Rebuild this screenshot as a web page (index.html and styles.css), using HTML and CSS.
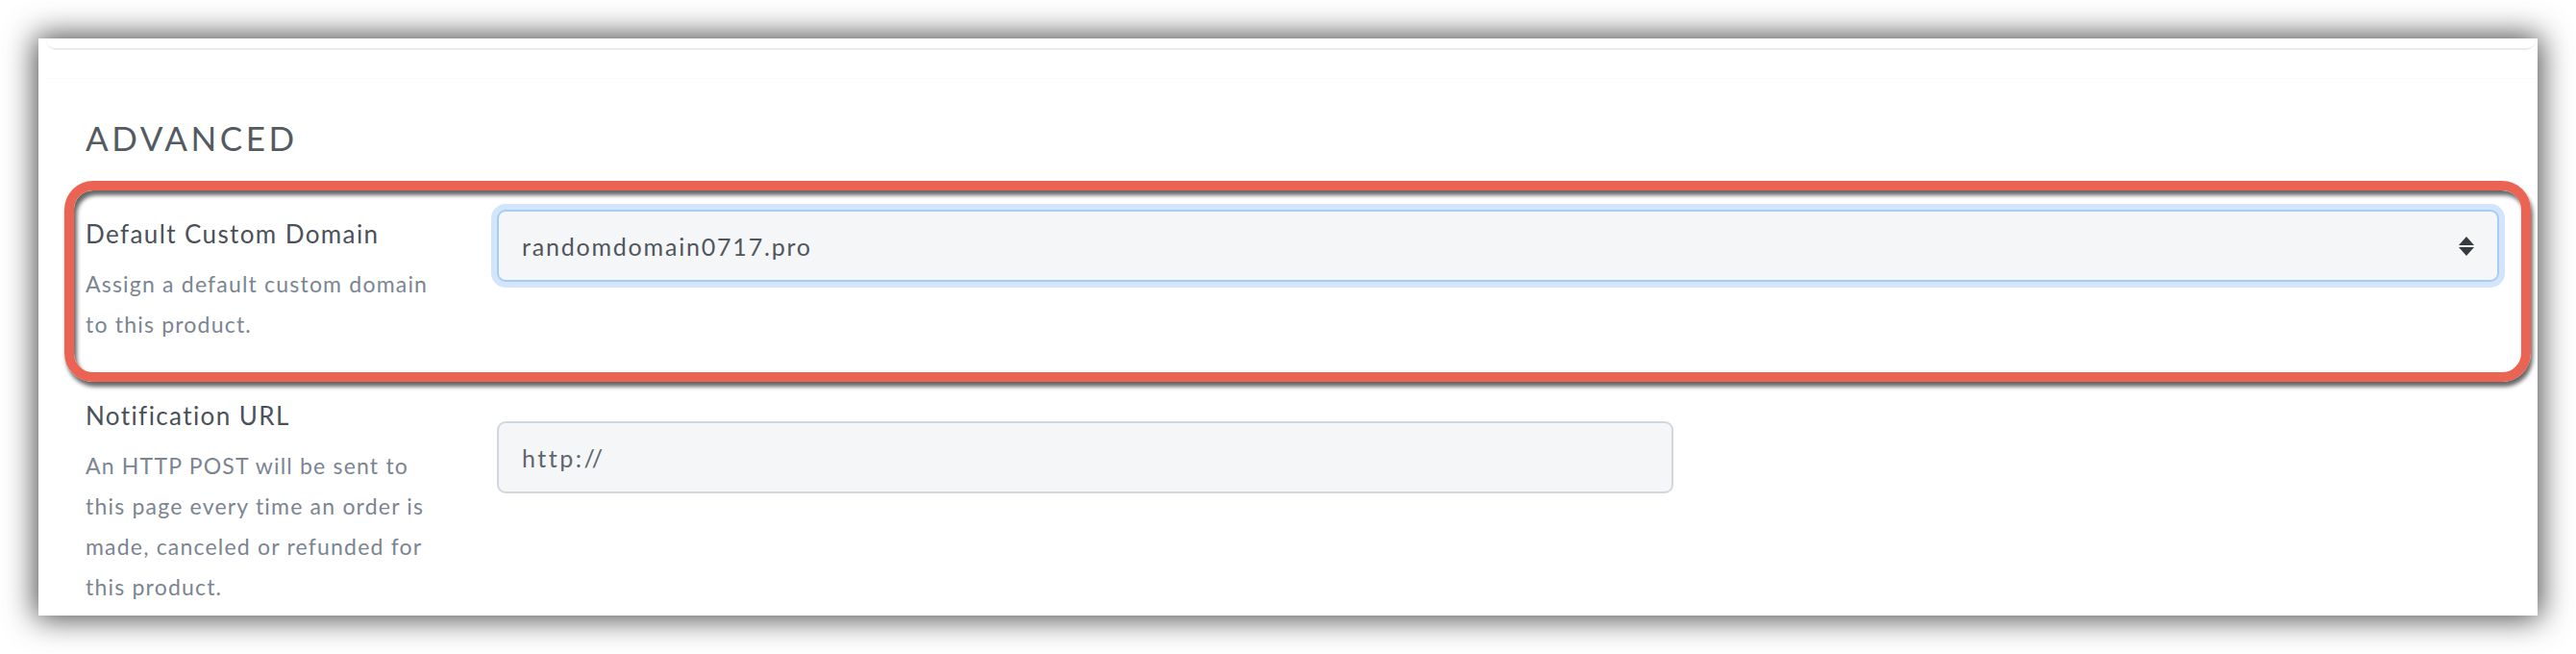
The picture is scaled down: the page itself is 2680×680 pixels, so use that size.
FILE: index.html
```html
<!DOCTYPE html>
<html lang="en">
<head>
<meta charset="utf-8">
<title>Advanced settings</title>
<link rel="stylesheet" href="styles.css">
</head>
<body>
<div class="page">
  <div class="card">
    <div class="prev-panel"></div>
    <div class="divider"></div>
    <section class="section">
      <h2 class="section-title">ADVANCED</h2>

      <div class="field field--highlight">
        <div class="field-info field-info--first">
          <div class="field-label">Default Custom Domain</div>
          <p class="field-help">Assign a default custom domain<br>to this product.</p>
        </div>
        <div class="field-control">
          <div class="select is-focused">
            <span class="select-value">randomdomain0717.pro</span>
            <svg class="select-arrows" width="16" height="20" viewBox="0 0 16 20" aria-hidden="true">
              <polygon points="8,0 16,9 0,9" fill="#353b42"/>
              <polygon points="0,11 16,11 8,20" fill="#353b42"/>
            </svg>
          </div>
        </div>
      </div>

      <div class="field field--notify">
        <div class="field-info">
          <div class="field-label">Notification URL</div>
          <p class="field-help">An HTTP POST will be sent to<br>this page every time an order is<br>made, canceled or refunded for<br>this product.</p>
        </div>
        <div class="field-control">
          <div class="text-input"><span class="input-value">http://</span></div>
        </div>
      </div>
    </section>
  </div>
</div>
</body>
</html>
```

FILE: styles.css
```css
html, body {
  margin: 0;
  padding: 0;
  background: #ffffff;
}

body {
  font-family: Lato, "Open Sans", "Liberation Sans", sans-serif;
  color: #4b5159;
}

.page {
  padding: 40px;
}

.card {
  height: 600px;
  background: #ffffff;
  box-shadow: 0 0 30px 3px rgba(0, 0, 0, 0.72);
  position: relative;
  overflow: hidden;
}

.prev-panel {
  height: 10px;
  margin: 0 2px 0 8px;
  border-bottom: 2px solid #ececec;
  border-radius: 0 0 10px 10px;
}

.divider {
  height: 1px;
  margin: 29px 0 0 8px;
  background: #fafafa;
}

.section {
  padding: 0 40px 0 49px;
}

.section-title {
  margin: 40px 0 54px;
  font-size: 35px;
  line-height: 42px;
  font-weight: 400;
  letter-spacing: 3.6px;
  color: #535a62;
}

.field {
  display: grid;
  grid-template-columns: 428px 1fr;
  align-items: start;
  position: relative;
}

.field--highlight::before {
  content: "";
  position: absolute;
  top: -30px;
  left: -22px;
  right: -33px;
  bottom: -39px;
  border: 10px solid #eb6352;
  border-radius: 30px;
  box-shadow: 2px 5px 4px rgba(0, 0, 0, 0.6), inset 3px 5px 4px rgba(0, 0, 0, 0.6);
  pointer-events: none;
}

.field--notify {
  margin-top: 56px;
}

.field-info--first {
  padding-top: 7px;
}

.field-label {
  font-size: 26px;
  line-height: 36px;
  letter-spacing: 1.4px;
  color: #4b5159;
  margin-bottom: 13px;
  white-space: nowrap;
}

.field-help {
  margin: 0;
  font-size: 23px;
  line-height: 42px;
  letter-spacing: 1.2px;
  color: #7b8592;
  white-space: nowrap;
}

.select {
  height: 75px;
  box-sizing: border-box;
  border: 2px solid #a6cdf5;
  border-radius: 9px;
  box-shadow: 0 0 0 6px #d3e5fa;
  background: #f5f6f8;
  display: flex;
  align-items: center;
  justify-content: space-between;
  padding: 0 24px 0 24px;
}

.select-value {
  font-size: 25px;
  letter-spacing: 1.8px;
  color: #50565d;
}

.select-arrows {
  display: block;
}

.field--notify .field-control {
  margin-top: 24px;
}

.text-input {
  width: 1224px;
  height: 75px;
  box-sizing: border-box;
  border: 2px solid #d0d7df;
  border-radius: 9px;
  background: #f5f6f8;
  display: flex;
  align-items: center;
  padding: 0 24px;
}

.input-value {
  font-size: 25px;
  letter-spacing: 2.5px;
  color: #5f666e;
}
```
